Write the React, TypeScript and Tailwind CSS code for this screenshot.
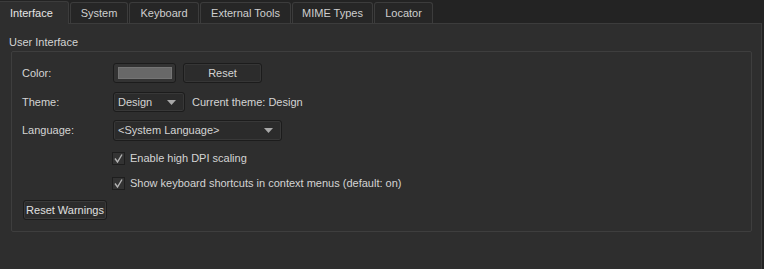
import React from "react";

const tabs = [
  { label: "Interface", w: 69 },
  { label: "System", w: 58 },
  { label: "Keyboard", w: 70 },
  { label: "External Tools", w: 91 },
  { label: "MIME Types", w: 81 },
  { label: "Locator", w: 59 },
];

function Combo({ value, width }: { value: string; width: string }) {
  return (
    <div
      className={`${width} h-full flex items-center justify-between pl-[4px] pr-[8px] rounded-[3px] border border-[#1c1c1c] bg-[#2b2b2b] shadow-[inset_0_0_0_1px_#383838]`}
    >
      <span>{value}</span>
      <svg width="9" height="5" viewBox="0 0 9 5">
        <path d="M0 0H9L4.5 5Z" fill="#a8a8a8" />
      </svg>
    </div>
  );
}

function Check({ label }: { label: string }) {
  return (
    <div className="flex items-center h-[16px] mt-[9px] pl-[90px]">
      <div className="w-[13px] h-[13px] flex items-center justify-center bg-[#333333] border border-[#1e1e1e]">
        <svg width="9" height="9" viewBox="0 0 9 9">
          <path d="M1 4.5L3.5 8L8 0.5" fill="none" stroke="#b4b4b4" strokeWidth="1.4" />
        </svg>
      </div>
      <span className="ml-[5px]">{label}</span>
    </div>
  );
}

export default function App() {
  return (
    <div
      className="w-[764px] h-[269px] bg-[#232323] flex flex-col text-[11px] text-[#d4d4d4]"
      style={{ fontFamily: '"Liberation Sans", Tahoma, sans-serif' }}
    >
      {/* tab bar */}
      <div className="flex h-[23px] items-end">
        {tabs.map((t, i) =>
          i === 0 ? (
            <div
              key={t.label}
              className="h-[23px] flex items-center pl-[10px] bg-[#2e2e2e] border-t border-r border-[#3c3c3c] rounded-tr-[3px] text-[#e6e6e6] -mb-px relative z-10"
              style={{ width: t.w }}
            >
              {t.label}
            </div>
          ) : (
            <div
              key={t.label}
              className="h-[21px] flex items-center justify-center ml-[1px] bg-[#262626] border border-b-0 border-[#3c3c3c] rounded-t-[3px] text-[#cfcfcf]"
              style={{ width: t.w }}
            >
              {t.label}
            </div>
          )
        )}
      </div>

      {/* pane */}
      <div className="flex-1 w-[762px] bg-[#2e2e2e] border-t border-r border-[#3c3c3c] flex flex-col">
        <div className="pl-[9px] pt-[10px] h-[27px] leading-[16px]">User Interface</div>
        <div className="ml-[11px] w-[741px] border border-[#3e3e3e] rounded-[2px] pb-[11px] pl-[10px]">
          {/* Color */}
          <div className="flex items-center h-[20px] mt-[11px]">
            <div className="w-[91px]">Color:</div>
            <div className="w-[63px] h-[20px] rounded-[3px] border border-[#1c1c1c] bg-[#333333] flex items-center justify-center">
              <div className="w-[54px] h-[12px] bg-[#686868] border border-[#757575]" />
            </div>
            <div className="ml-[7px] w-[79px] h-[20px] rounded-[3px] border border-[#1c1c1c] bg-[#2c2c2c] shadow-[inset_0_0_0_1px_#363636] flex items-center justify-center">
              Reset
            </div>
          </div>
          {/* Theme */}
          <div className="flex items-center h-[20px] mt-[9px]">
            <div className="w-[91px]">Theme:</div>
            <Combo value="Design" width="w-[72px]" />
            <span className="ml-[7px]">Current theme: Design</span>
          </div>
          {/* Language */}
          <div className="flex items-center h-[21px] mt-[8px]">
            <div className="w-[91px]">Language:</div>
            <Combo value="<System Language>" width="w-[169px]" />
          </div>
          <Check label="Enable high DPI scaling" />
          <Check label="Show keyboard shortcuts in context menus (default: on)" />
          <div className="mt-[9px] ml-[1px] w-[84px] h-[20px] rounded-[3px] border border-[#1c1c1c] bg-[#2c2c2c] shadow-[inset_0_0_0_1px_#3a3a3a] flex items-center justify-center text-[#e0e0e0]">
            Reset Warnings
          </div>
        </div>
      </div>
    </div>
  );
}
